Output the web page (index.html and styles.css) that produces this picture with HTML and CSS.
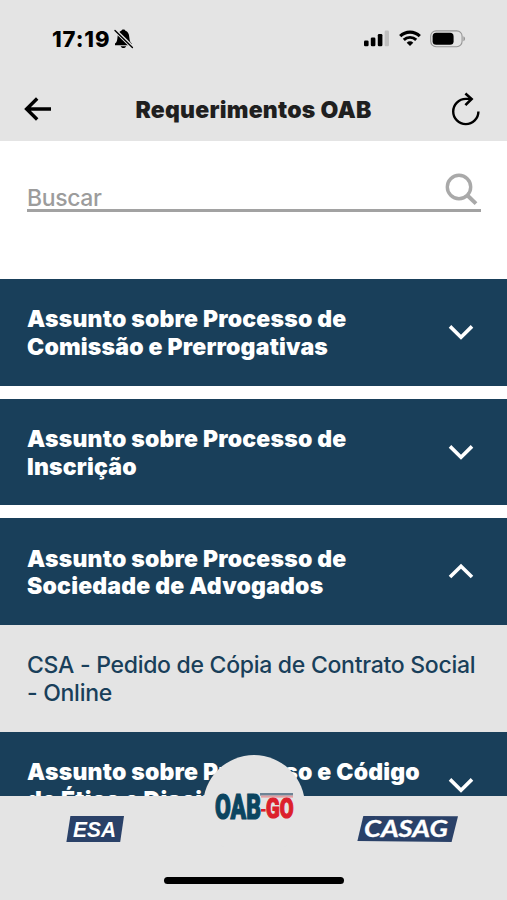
FILE: index.html
```html
<!DOCTYPE html>
<html lang="pt-BR">
<head>
  <meta charset="UTF-8">
  <meta name="viewport" content="width=device-width, initial-scale=1">
  <title>Requerimentos OAB</title>
  <link rel="stylesheet" href="styles.css">
</head>
<body>
  <div class="app">
    <header class="header">
      <div class="status-bar">
        <div class="status-left">
          <span class="time">17:19</span>
          <svg class="bell" width="20" height="20" viewBox="0 0 20 20">
            <path d="M1 16.2V14.6C3 13 3.2 11.4 3.5 8.2C3.7 4.8 5.2 2.5 7.4 1.8C7.7.2 11.1.2 11.4 1.8C13.8 2.5 15.1 4.8 15.3 8.2C15.6 11.4 16 13 17.8 14.6V16.2Z" fill="#000"/>
            <path d="M6.7 17.2H12.1C11.6 19.6 7.2 19.6 6.7 17.2Z" fill="#000"/>
            <path d="M1 1.2L18.6 18.4" stroke="#e4e4e4" stroke-width="3.6"/>
            <path d="M1 1.4L18.4 18.4" stroke="#000" stroke-width="1.4" stroke-linecap="round"/>
          </svg>
        </div>
        <div class="status-right">
          <svg width="26" height="17" viewBox="0 0 26 17">
            <rect x="0" y="10.5" width="4.6" height="5.8" rx="1.3"/>
            <rect x="6.8" y="7.4" width="4.6" height="8.9" rx="1.3"/>
            <rect x="13.8" y="4" width="4.6" height="12.3" rx="1.3"/>
            <rect x="20.6" y=".6" width="4.4" height="15.7" rx="1.3" fill="#c0c0c0"/>
          </svg>
          <svg class="wifi" width="22" height="17" viewBox="0 0 22 17">
            <path d="M1.2 6.2C6.6.8 15.4.8 20.8 6.2" fill="none" stroke="#000" stroke-width="3.1"/>
            <path d="M4.8 9.9C8.2 6.5 13.8 6.5 17.2 9.9" fill="none" stroke="#000" stroke-width="2.9"/>
            <path d="M7.7 12.7C9.6 10.9 12.4 10.9 14.3 12.7L11 16.1Z"/>
          </svg>
          <svg class="battery" width="36" height="18" viewBox="0 0 36 18">
            <rect x=".7" y=".9" width="31.4" height="15.8" rx="5.4" fill="none" stroke="#969696" stroke-width="1.1"/>
            <rect x="2.6" y="2.8" width="21" height="12" rx="3.6"/>
            <path d="M33.4 6.3C35.6 7.2 35.6 10.3 33.4 11.2Z" fill="#969696"/>
          </svg>
        </div>
      </div>
      <div class="nav-bar">
        <svg width="28" height="26" viewBox="0 0 28 26">
          <path d="M13.2 2.5L2.6 13L13.2 23.5M3 13H27" fill="none" stroke="#000" stroke-width="3.4"/>
        </svg>
        <h1 class="title">Requerimentos OAB</h1>
        <svg class="refresh" width="30" height="34" viewBox="0 0 30 34">
          <path d="M27.4 19.5A12.6 12.6 0 1 1 14.8 6.9H20" fill="none" stroke="#000" stroke-width="2.4"/>
          <path d="M14.4 1.6L20.6 7L14.4 13.2" fill="none" stroke="#000" stroke-width="2.6"/>
        </svg>
      </div>
    </header>

    <div class="search">
      <span class="search-label">Buscar</span>
      <svg class="search-icon" width="33" height="33" viewBox="0 0 33 33">
        <circle cx="14" cy="14" r="11.7" fill="none" stroke="#a9a9a9" stroke-width="3.4"/>
        <path d="M22.5 22.5L31 30.6" stroke="#a9a9a9" stroke-width="4"/>
      </svg>
    </div>

    <main class="list">
      <section class="item">
        <h2 class="item-title">Assunto sobre Processo de<br>Comissão e Prerrogativas</h2>
        <svg class="chevron" width="26" height="17" viewBox="0 0 26 17"><path d="M2 2.4L13 13.2L24 2.4"/></svg>
      </section>
      <section class="item">
        <h2 class="item-title">Assunto sobre Processo de<br>Inscrição</h2>
        <svg class="chevron" width="26" height="17" viewBox="0 0 26 17"><path d="M2 2.4L13 13.2L24 2.4"/></svg>
      </section>
      <section class="item open">
        <h2 class="item-title">Assunto sobre Processo de<br>Sociedade de Advogados</h2>
        <svg class="chevron" width="26" height="17" viewBox="0 0 26 17"><path d="M2 14L13 3.2L24 14"/></svg>
      </section>
      <div class="item-body">CSA - Pedido de Cópia de Contrato Social<br>- Online</div>
      <section class="item">
        <h2 class="item-title">Assunto sobre Processo e Código<br>de Ética e Disciplina</h2>
        <svg class="chevron" width="26" height="17" viewBox="0 0 26 17"><path d="M2 2.4L13 13.2L24 2.4"/></svg>
      </section>
    </main>

    <footer class="tab-bar">
      <svg class="esa" width="60" height="28" viewBox="0 0 60 28">
        <path d="M5.4 1H59L55.2 27H1.4Z" fill="#2a4168"/>
        <text class="logo-esa" x="8" y="21.8" textLength="43" lengthAdjust="spacingAndGlyphs">ESA</text>
      </svg>
      <svg class="casag" width="102" height="28" viewBox="0 0 102 28">
        <path d="M6.3 1L101 1.3L94.6 27L.4 26Z" fill="#2a4168"/>
        <text class="logo-casag" x="7" y="22" textLength="84" lengthAdjust="spacingAndGlyphs">CASAG</text>
      </svg>
      <div class="home-button">
        <svg width="80" height="32" viewBox="0 0 80 32">
          <text class="logo-oab" x="1" y="27.2" textLength="46" lengthAdjust="spacingAndGlyphs">OAB</text>
          <rect x="46" y="1" width="33" height="2.6" fill="#6d8495"/>
          <rect x="47" y="3.6" width="32" height="2" fill="#e3a0a3"/>
          <rect x="47" y="17" width="4.6" height="2.6" fill="#dc202c"/>
          <text class="logo-go" x="52" y="26.4" textLength="27.5" lengthAdjust="spacingAndGlyphs">GO</text>
        </svg>
      </div>
      <div class="home-indicator"></div>
    </footer>
  </div>
</body>
</html>
```

FILE: styles.css
```css
* {
  box-sizing: border-box;
}

body {
  margin: 0;
  background: #fff;
  font-family: Inter, "Liberation Sans", sans-serif;
}

.app {
  display: flex;
  flex-direction: column;
  position: relative;
  height: 900px;
  max-width: 507px;
  overflow: hidden;
}

svg {
  display: block;
  flex: none;
}

.header {
  flex: none;
  height: 141px;
  background: #e4e4e4;
}

.status-bar {
  display: flex;
  justify-content: space-between;
  align-items: center;
  height: 77px;
  padding: 0 41px 0 52px;
}

.status-left,
.status-right {
  display: flex;
  align-items: center;
}

.time {
  font-size: 22px;
  font-weight: 800;
  line-height: 26px;
  letter-spacing: 0.9px;
}

.bell {
  margin-left: 4px;
}

.wifi {
  margin-left: 9px;
}

.battery {
  margin-left: 9px;
}

.nav-bar {
  display: flex;
  justify-content: space-between;
  align-items: center;
  height: 64px;
  padding: 0 26px 0 24px;
}

.title {
  margin: 0;
  padding: 1px 0 0 4px;
  color: #1f1f1f;
  font-size: 23px;
  font-weight: 900;
  line-height: 28px;
  letter-spacing: 0.24px;
}

.search {
  display: flex;
  flex: none;
  justify-content: space-between;
  align-items: flex-end;
  height: 71px;
  margin: 0 26px 67px 27px;
  border-bottom: 3px solid #a2a2a2;
}

.search-label {
  color: #9c9c9c;
  font-size: 23px;
  font-weight: 500;
  line-height: 22px;
  letter-spacing: -0.4px;
}

.search-icon {
  margin: 0 3px 3px 0;
}

.list {
  flex: 1;
  min-height: 0;
  overflow: hidden;
}

.item {
  display: flex;
  justify-content: space-between;
  align-items: center;
  height: 106.7px;
  margin-bottom: 13px;
  padding: 0 33px 0 27px;
  background: #193f5a;
  color: #fff;
}

.item.open {
  margin-bottom: 0;
}

.item-title {
  margin: 0;
  padding-top: 3px;
  font-size: 23px;
  font-weight: 900;
  line-height: 27.5px;
  letter-spacing: 0.2px;
  white-space: nowrap;
}

.item-body {
  height: 106.7px;
  padding: 27px 27px 0;
  background: #e4e4e4;
  color: #193f5a;
  font-size: 23px;
  font-weight: 500;
  line-height: 27.5px;
  letter-spacing: -0.28px;
  white-space: nowrap;
}

.chevron path {
  fill: none;
  stroke: #fff;
  stroke-width: 3.6;
}

.tab-bar {
  display: flex;
  flex: none;
  justify-content: space-between;
  position: relative;
  height: 104px;
  padding: 19px 48px 0 65px;
  background: #e4e4e4;
}

/* round button sticking out above the bar */
.home-button {
  display: flex;
  justify-content: center;
  position: absolute;
  top: -41px;
  left: 203px;
  width: 102px;
  height: 102px;
  padding-top: 37px;
  border-radius: 50%;
  background: #e4e4e4;
}

.home-indicator {
  position: absolute;
  bottom: 16px;
  left: 164px;
  width: 180px;
  height: 7px;
  border-radius: 4px;
  background: #000;
}

.logo-esa {
  fill: #fff;
  font: italic 700 22px "Liberation Sans", sans-serif;
}

.logo-casag {
  fill: #fff;
  stroke: #fff;
  stroke-width: 0.3;
  font: italic 700 23px Lato, sans-serif;
}

.logo-oab,
.logo-go {
  font-family: Roboto, "Liberation Sans", sans-serif;
  font-weight: 900;
  stroke-width: 1.2;
}

.logo-oab {
  fill: #0b4560;
  stroke: #0b4560;
  font-size: 35px;
}

.logo-go {
  fill: #dc202c;
  stroke: #dc202c;
  font-size: 27px;
}
```
